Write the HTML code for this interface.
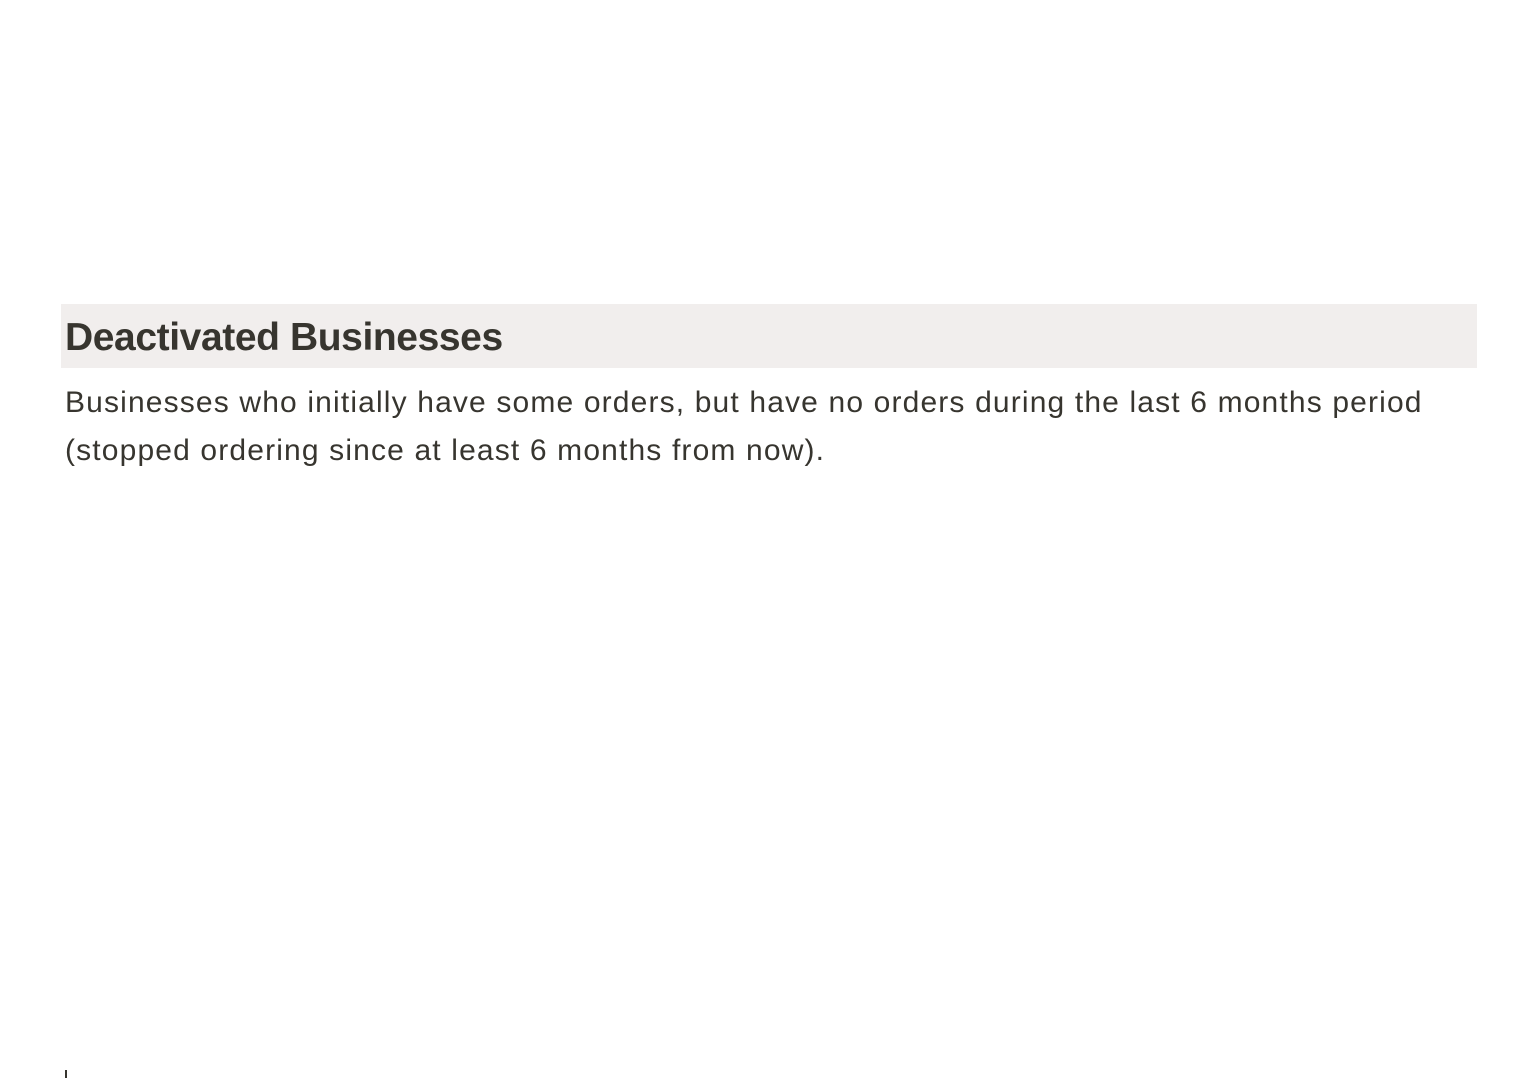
<!DOCTYPE html>
<html><head><style>
html,body{margin:0;padding:0;background:#fff;width:1536px;height:1078px;overflow:hidden;font-family:"Liberation Sans",sans-serif;color:#37352f}
.h{position:absolute;left:61px;top:304px;width:1416px;height:64px;background:#f1eeed}
.h span{position:absolute;left:4px;top:12px;font-weight:bold;font-size:39px;line-height:44px;letter-spacing:-0.4px;color:#37352f;white-space:nowrap}
.p{position:absolute;left:65px;top:379px;width:1420px;font-size:30px;line-height:48px;letter-spacing:1.15px;color:#37352f;white-space:nowrap}
.m{position:absolute;left:65px;top:1070px;width:2px;height:8px;background:#37352f}
</style></head><body>
<div class="h"><span>Deactivated Businesses</span></div>
<div class="p">Businesses who initially have some orders, but have no orders during the last 6 months period<br>(stopped ordering since at least 6 months from now).</div>
<div class="m"></div>
</body></html>
